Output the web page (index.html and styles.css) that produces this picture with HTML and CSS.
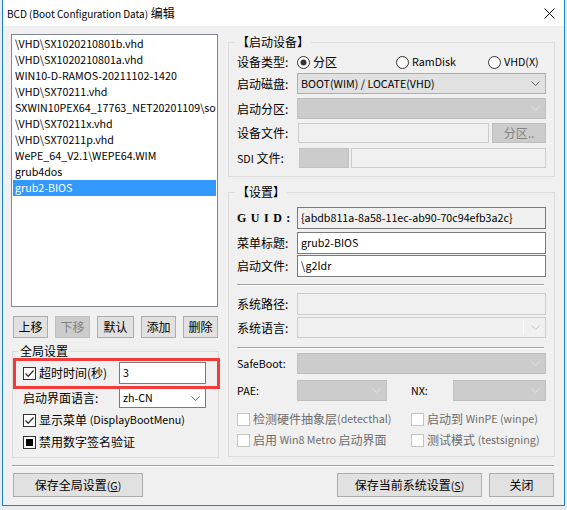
FILE: index.html
```html
<!DOCTYPE html>
<html lang="zh-CN">
<head>
<meta charset="utf-8">
<title>BCD 编辑</title>
<link rel="stylesheet" href="styles.css">
</head>
<body>
<div class="window">
  <div class="titlebar">
    <span class="title"><span class="en-t">BCD (Boot Configuration Data)</span> 编辑</span>
    <svg class="close" viewBox="0 0 11 11" width="11" height="11"><path d="M0.5 0.5 L10.5 10.5 M10.5 0.5 L0.5 10.5"/></svg>
  </div>
  <div class="client">
    <div class="main">
      <div class="leftcol">
        <div class="listbox">
          <div class="item">\VHD\SX1020210801b.vhd</div>
          <div class="item">\VHD\SX1020210801a.vhd</div>
          <div class="item">WIN10-D-RAMOS-20211102-1420</div>
          <div class="item">\VHD\SX70211.vhd</div>
          <div class="item">SXWIN10PEX64_17763_NET20201109\sources\boot.wim</div>
          <div class="item">\VHD\SX70211x.vhd</div>
          <div class="item">\VHD\SX70211p.vhd</div>
          <div class="item">WePE_64_V2.1\WEPE64.WIM</div>
          <div class="item">grub4dos</div>
          <div class="item sel">grub2-BIOS</div>
        </div>
        <div class="btnrow">
          <button class="btn">上移</button>
          <button class="btn dis">下移</button>
          <button class="btn">默认</button>
          <button class="btn">添加</button>
          <button class="btn">删除</button>
        </div>
        <fieldset class="group global">
          <legend>全局设置</legend>
          <div class="gin">
            <div class="grow h22">
              <span class="chk"><span class="box"><svg viewBox="0 0 11 11"><path d="M1.5 5.5 L4.2 8.2 L9.5 2.5"/></svg></span>超时时间(秒)</span>
              <div class="edit w87"><span class="en">3</span></div>
            </div>
            <div class="grow h20 mt4">
              <span class="glabel">启动界面语言:</span>
              <div class="combo white w87"><span class="en">zh-CN</span><svg class="chev" viewBox="0 0 9 5"><path d="M0.5 0.5 L4.5 4.5 L8.5 0.5"/></svg></div>
            </div>
            <div class="grow h16 mt4">
              <span class="chk"><span class="box"><svg viewBox="0 0 11 11"><path d="M1.5 5.5 L4.2 8.2 L9.5 2.5"/></svg></span>显示菜单&nbsp;<span class="en">(DisplayBootMenu)</span></span>
            </div>
            <div class="grow h16 mt6">
              <span class="chk"><span class="box"><span class="ind"></span></span>禁用数字签名验证</span>
            </div>
          </div>
          <div class="annot"></div>
        </fieldset>
      </div>
      <div class="rightcol">
        <fieldset class="group dev">
          <legend>【启动设备】</legend>
          <div class="rin">
            <div class="row h20 mt2">
              <span class="lbl">设备类型:</span>
              <div class="radios">
                <span class="radio r1"><svg viewBox="0 0 13 13"><circle cx="6.5" cy="6.5" r="6"/><circle class="dot" cx="6.5" cy="6.5" r="3"/></svg>分区</span>
                <span class="radio r2"><svg viewBox="0 0 13 13"><circle cx="6.5" cy="6.5" r="6"/></svg><span class="en">RamDisk</span></span>
                <span class="radio"><svg viewBox="0 0 13 13"><circle cx="6.5" cy="6.5" r="6"/></svg><span class="en">VHD(X)</span></span>
              </div>
            </div>
            <div class="row h21 mt1">
              <span class="lbl">启动磁盘:</span>
              <div class="combo grow1"><span class="en">BOOT(WIM) / LOCATE(VHD)</span><svg class="chev" viewBox="0 0 9 5"><path d="M0.5 0.5 L4.5 4.5 L8.5 0.5"/></svg></div>
            </div>
            <div class="row h21 mt4">
              <span class="lbl">启动分区:</span>
              <div class="combo off grow1"><svg class="chev" viewBox="0 0 9 5"><path d="M0.5 0.5 L4.5 4.5 L8.5 0.5"/></svg></div>
            </div>
            <div class="row h20 mt4">
              <span class="lbl">设备文件:</span>
              <div class="edit off grow1 ml1"></div>
              <button class="btn dis fbtn">分区..</button>
            </div>
            <div class="row h20 mt5">
              <span class="lbl"><span class="en">SDI</span> 文件:</span>
              <div class="sdibox"></div>
              <div class="edit off grow1"></div>
            </div>
          </div>
        </fieldset>
        <fieldset class="group set">
          <legend>【设置】</legend>
          <div class="rin">
            <div class="row h22 mt7">
              <span class="lbl guid">GUID:</span>
              <div class="edit ro grow1"><span class="en">{abdb811a-8a58-11ec-ab90-70c94efb3a2c}</span></div>
            </div>
            <div class="row h22 mt3">
              <span class="lbl">菜单标题:</span>
              <div class="edit grow1"><span class="en">grub2-BIOS</span></div>
            </div>
            <div class="row h22 mt1">
              <span class="lbl">启动文件:</span>
              <div class="edit grow1"><span class="en">\g2ldr</span></div>
            </div>
            <div class="isep mt7"></div>
            <div class="row h22 mt7">
              <span class="lbl">系统路径:</span>
              <div class="edit off grow1"></div>
            </div>
            <div class="row h21 mt2">
              <span class="lbl">系统语言:</span>
              <div class="combo offedit grow1"><span class="inner"></span><svg class="chev" viewBox="0 0 9 5"><path d="M0.5 0.5 L4.5 4.5 L8.5 0.5"/></svg></div>
            </div>
            <div class="isep mt9"></div>
            <div class="row h21 mt4">
              <span class="lbl en">SafeBoot:</span>
              <div class="combo off grow1"><svg class="chev" viewBox="0 0 9 5"><path d="M0.5 0.5 L4.5 4.5 L8.5 0.5"/></svg></div>
            </div>
            <div class="row h21 mt6">
              <span class="lbl en">PAE:</span>
              <div class="combo off w90"><svg class="chev" viewBox="0 0 9 5"><path d="M0.5 0.5 L4.5 4.5 L8.5 0.5"/></svg></div>
              <span class="lbl en nx">NX:</span>
              <div class="combo off grow1"><svg class="chev" viewBox="0 0 9 5"><path d="M0.5 0.5 L4.5 4.5 L8.5 0.5"/></svg></div>
            </div>
            <div class="cbgrid h16 mt10">
              <span class="chk dim"><span class="box"></span>检测硬件抽象层<span class="en">(detecthal)</span></span>
              <span class="chk dim"><span class="box"></span>启动到&nbsp;<span class="en">WinPE (winpe)</span></span>
            </div>
            <div class="cbgrid h16 mt5">
              <span class="chk dim"><span class="box"></span>启用&nbsp;<span class="en">Win8 Metro</span>&nbsp;启动界面</span>
              <span class="chk dim"><span class="box"></span>测试模式&nbsp;<span class="en">(testsigning)</span></span>
            </div>
          </div>
        </fieldset>
      </div>
    </div>
    <div class="hsep"></div>
    <div class="footer">
      <button class="btn f1">保存全局设置<span class="en">(<u>G</u>)</span></button>
      <span class="spacer"></span>
      <button class="btn f2">保存当前系统设置<span class="en">(<u>S</u>)</span></button>
      <button class="btn f3">关闭</button>
    </div>
  </div>
</div>
</body>
</html>
```

FILE: styles.css
```css
* { box-sizing: border-box; }
html, body { margin: 0; padding: 0; }
body {
  width: 567px;
  height: 510px;
  overflow: hidden;
  background: #e9ecef;
  font-family: "Noto Sans CJK SC", "Noto Sans", sans-serif;
  font-size: 12px;
  line-height: 16px;
  color: #000;
}
.en { font-size: 10.7px; }
.en-t { font-size: 10px; }
.window {
  margin-left: 2px;
  width: 563px;
  height: 506px;
  border: 1px solid #1883d7;
  border-top: none;
  background: #f0f0f0;
  display: flex;
  flex-direction: column;
}
.titlebar {
  height: 26px;
  background: #fff;
  display: flex;
  align-items: center;
  justify-content: space-between;
  padding-left: 4px;
  padding-right: 9px;
}
.title { font-size: 12px; white-space: nowrap; }
.close { width: 11px; height: 11px; }
.close path { stroke: #000; stroke-width: 1; fill: none; }

.client { padding: 8px 9px 0 8px; display: flex; flex-direction: column; }
.main { display: flex; gap: 9px; height: 424px; }
.leftcol { width: 208px; display: flex; flex-direction: column; }
.rightcol { width: 327px; display: flex; flex-direction: column; }

.listbox {
  width: 207px;
  height: 273px;
  border: 1px solid #828790;
  background: #fff;
  padding: 1px;
  overflow: hidden;
  font-size: 10.7px;
}
.item { height: 16px; line-height: 16px; padding-left: 2px; white-space: nowrap; overflow: hidden; }
.item.sel { background: #3399ff; color: #fff; }

button { font: inherit; margin: 0; padding: 0; color: #000; }
.btn {
  background: #e1e1e1;
  border: 1px solid #adadad;
  line-height: 16px;
  text-align: center;
}
.btn.dis { background: #cccccc; border-color: #bfbfbf; color: #838383; }
.btnrow {
  margin-top: 9px;
  height: 22px;
  padding-left: 2px;
  display: grid;
  grid-template-columns: 35px 35px 37px 35px 35px;
  gap: 7px;
}

.group { margin: 0; padding: 0; border: 1px solid #dcdcdc; min-width: 0; }
.group legend { padding: 0 2px; line-height: 16px; height: 16px; }
.global { margin-top: 5px; margin-left: 1px; width: 207px; position: relative; }
.global legend { margin-left: 5px; }
.gin { padding: 3px 10px 7px 10px; }
.grow { display: flex; align-items: center; }
.glabel { width: 96px; }
.chk { display: flex; align-items: center; white-space: nowrap; }
.grow .chk { width: 96px; }
.box {
  width: 13px; height: 13px;
  border: 1px solid #333;
  background: #fff;
  margin-right: 3px;
  display: flex; align-items: center; justify-content: center;
  flex: none;
}
.box svg { width: 11px; height: 11px; }
.box path { stroke: #333; stroke-width: 1.3; fill: none; }
.ind { width: 7px; height: 7px; background: #000; }
.chk.dim { color: #6d6d6d; }
.chk.dim .box { border-color: #c4c4c4; background: #fff; }

.annot {
  position: absolute;
  left: 0; top: -1px;
  width: 207px; height: 31px;
  border: 3px solid #f23c3c;
}

.h16 { height: 16px; } .h20 { height: 20px; } .h21 { height: 21px; } .h22 { height: 22px; }
.mt1 { margin-top: 1px; } .mt2 { margin-top: 2px; } .mt3 { margin-top: 3px; } .mt4 { margin-top: 4px; }
.mt5 { margin-top: 5px; } .mt6 { margin-top: 6px; } .mt7 { margin-top: 7px; } .mt9 { margin-top: 9px; }
.mt10 { margin-top: 10px; }
.w87 { width: 87px; } .w90 { width: 90px; }
.grow1 { flex: 1; }
.ml1 { margin-left: 1px; }

.edit {
  height: 100%;
  background: #fff;
  border: 1px solid #7a7a7a;
  padding-left: 3px;
  display: flex; align-items: center;
  white-space: nowrap; overflow: hidden;
}
.edit.ro { background: #f0f0f0; }
.edit.off { background: #f0f0f0; border-color: #cccccc; }

.combo {
  height: 100%;
  background: #e1e1e1;
  border: 1px solid #adadad;
  padding-left: 3px;
  display: flex; align-items: center;
  white-space: nowrap;
}
.combo .chev { width: 9px; height: 5px; margin-left: auto; margin-right: 5px; flex: none; }
.chev path { stroke: #606060; stroke-width: 1; fill: none; }
.combo.white { background: #fff; border-color: #7a7a7a; }
.combo.off { background: #cccccc; border-color: #bfbfbf; }
.combo.off .chev path { stroke: #dedede; }
.combo.offedit { background: #f0f0f0; border-color: #cccccc; padding: 2px; }
.combo.offedit .inner { flex: 1; align-self: stretch; background: #f0f0f0; border-right: 1px solid #fff; }
.combo.offedit .chev { margin-left: 7px; margin-right: 3px; }
.combo.offedit .chev path { stroke: #c8c8c8; }

.dev { height: 143px; }
.set { margin-top: 7px; }
.dev legend, .set legend { margin-left: 6px; }
.rin { padding: 0 8px 8px 8px; }
.row { display: flex; align-items: center; }
.lbl { width: 60px; flex: none; white-space: nowrap; }
.lbl.guid {
  font-family: "Liberation Serif", "DejaVu Serif", serif;
  font-weight: bold;
  letter-spacing: 4.5px;
}
.lbl.nx { width: 42px; margin-left: 24px; }
.radios { display: flex; flex: 1; align-items: center; }
.radio { display: flex; align-items: center; white-space: nowrap; }
.radio svg { width: 13px; height: 13px; margin-right: 3px; }
.radio circle { fill: #fff; stroke: #333; stroke-width: 1; }
.radio circle.dot { fill: #333; stroke: none; }
.r1 { width: 99px; } .r2 { width: 92px; }
.fbtn { width: 54px; height: 20px; margin-left: 3px; }
.sdibox { width: 50px; height: 100%; margin-left: 2px; margin-right: 2px; background: #cccccc; border: 1px solid #c4c4c4; }
.isep { height: 2px; border-top: 1px solid #a0a0a0; border-bottom: 1px solid #fff; margin-right: 2px; }
.cbgrid { display: grid; grid-template-columns: 174px 1fr; align-items: center; }

.hsep { margin: 7px 1px 0 1px; height: 2px; border-top: 1px solid #a0a0a0; border-bottom: 1px solid #fff; }
.footer { display: flex; margin-top: 6px; height: 24px; padding-left: 2px; padding-right: 1px; gap: 7px; }
.spacer { flex: 1; }
.f1 { width: 130px; }
.f2 { width: 145px; }
.f3 { width: 65px; }
u { text-decoration: underline; }
```
